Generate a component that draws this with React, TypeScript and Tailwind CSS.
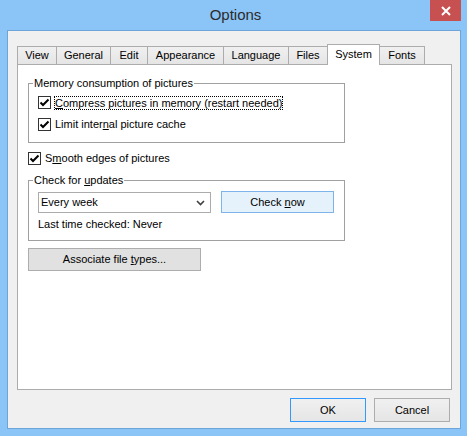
import React from "react";

const font = { fontFamily: '"Liberation Sans", Arial, sans-serif' };

function Check() {
  return (
    <div className="w-[13px] h-[13px] border border-[#333333] bg-white flex items-center justify-center shrink-0">
      <svg width="11" height="11" viewBox="0 0 11 11">
        <path d="M1.5 5.5 L4 8 L9.5 2.5" stroke="#000" strokeWidth="2" fill="none" />
      </svg>
    </div>
  );
}

const tabs: { label: React.ReactNode; w: string; sel?: boolean }[] = [
  { label: "View", w: "w-[40px]" },
  { label: "General", w: "w-[55px]" },
  { label: "Edit", w: "w-[38px]" },
  { label: "Appearance", w: "w-[77px]" },
  { label: "Language", w: "w-[66px]" },
  { label: "Files", w: "w-[40px]" },
  { label: "System", w: "w-[53px]", sel: true },
  { label: "Fonts", w: "w-[46px]" },
];

export default function App() {
  return (
    <div
      className="w-[467px] h-[436px] bg-[#8bc4f6] flex flex-col pl-[7px] pr-[6px] pb-[7px] text-[11px] leading-[13px] text-black"
      style={font}
    >
      {/* Title bar */}
      <div className="h-[30px] grid grid-cols-[1fr_auto_1fr] items-start">
        <div />
        <div className="text-[15px] leading-[18px] text-[#2b2b2b] mt-[6px] ml-[3px]">Options</div>
        <div className="justify-self-end">
          <div className="w-[31px] h-[21px] bg-[#c75050] flex items-center justify-center">
            <svg width="10" height="10" viewBox="0 0 10 10">
              <path d="M1 1 L9 9 M9 1 L1 9" stroke="#fff" strokeWidth="2" />
            </svg>
          </div>
        </div>
      </div>

      {/* Client */}
      <div className="flex-1 border border-[#6ea5d9] bg-[#f0f0f0] flex flex-col pt-[13px] pl-[9px] pr-[8px] pb-[6px]">
        {/* Tabs */}
        <div className="flex items-end h-[21px] -mb-px relative z-10">
          {tabs.map((t, i) => (
            <div
              key={i}
              className={
                (i > 0 ? "-ml-px " : "") +
                t.w +
                (t.sel
                  ? " h-[21px] bg-white border border-b-0 border-[#acacac] relative z-10"
                  : " h-[19px] bg-gradient-to-b from-[#f0f0f0] to-[#e5e5e5] border border-[#acacac]") +
                " flex items-center justify-center"
              }
            >
              <span className={t.sel ? "-mt-[1px]" : ""}>{t.label}</span>
            </div>
          ))}
        </div>

        {/* Panel */}
        <div className="h-[326px] bg-white border border-[#acacac] pl-[10px] pt-[12px] flex flex-col">
          <fieldset className="w-[317px] h-[66px] border border-[#a0a0a0] p-0 m-0">
            <legend className="ml-[4px] px-[1px] leading-[13px]">Memory consumption of pictures</legend>
            <div className="pl-[9px] pt-[6px] flex flex-col gap-[9px]">
              <div className="flex items-center h-[13px] gap-[3px]">
                <Check />
                <span className="border border-dotted border-black leading-[12px] h-[14px]">
                  <u>C</u>ompress pictures in memory (restart needed)
                </span>
              </div>
              <div className="flex items-center h-[13px] gap-[3px]">
                <Check />
                <span className="border border-transparent">
                  Limit inter<u>n</u>al picture cache
                </span>
              </div>
            </div>
          </fieldset>

          <div className="flex items-center h-[13px] gap-[3px] mt-[9px]">
            <Check />
            <span className="border border-transparent">
              S<u>m</u>ooth edges of pictures
            </span>
          </div>

          <fieldset className="w-[317px] h-[67px] border border-[#a0a0a0] p-0 m-0 mt-[9px]">
            <legend className="ml-[4px] px-[1px] leading-[13px]">
              Check for <u>u</u>pdates
            </legend>
            <div className="pl-[9px] pt-[4px] flex flex-col">
              <div className="flex items-end gap-[10px] h-[22px]">
                <div className="w-[173px] h-[21px] border border-[#acacac] bg-white flex items-center justify-between pl-[2px] pr-[5px]">
                  <span>Every week</span>
                  <svg width="9" height="6" viewBox="0 0 9 6">
                    <path d="M1 1 L4.5 4.5 L8 1" stroke="#404040" strokeWidth="1.6" fill="none" />
                  </svg>
                </div>
                <div className="w-[113px] h-[22px] border border-[#7eb4ea] bg-[#e5f1fb] flex items-center justify-center">
                  <span>
                    Check <u>n</u>ow
                  </span>
                </div>
              </div>
              <div className="mt-[5px] h-[13px]">Last time checked: Never</div>
            </div>
          </fieldset>

          <div className="mt-[7px] w-[173px] h-[23px] border border-[#adadad] bg-[#e1e1e1] flex items-center justify-center">
            <span>
              Associate file <u>t</u>ypes...
            </span>
          </div>
        </div>

        {/* Buttons */}
        <div className="flex justify-end gap-[8px] mt-[8px] pr-[2px]">
          <div className="w-[76px] h-[24px] border border-[#3399ff] bg-gradient-to-b from-[#f0f0f0] to-[#e5e5e5] flex items-center justify-center">
            OK
          </div>
          <div className="w-[76px] h-[24px] border border-[#adadad] bg-gradient-to-b from-[#f0f0f0] to-[#e5e5e5] flex items-center justify-center">
            Cancel
          </div>
        </div>
      </div>
    </div>
  );
}
